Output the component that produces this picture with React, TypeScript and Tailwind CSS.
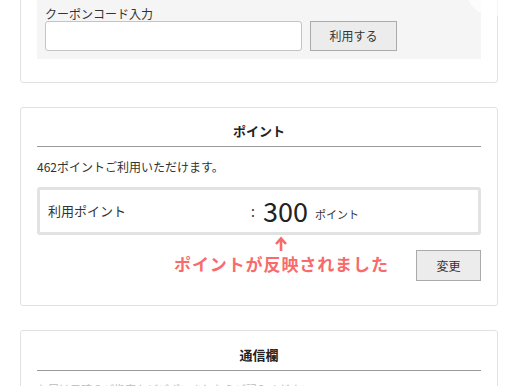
import React from "react";

const font = { fontFamily: '"Noto Sans CJK JP", "Noto Sans", sans-serif' };

function Title({ children }: { children: React.ReactNode }) {
  return (
    <div className="h-[26px] border-b border-[#999] flex items-start justify-center">
      <span className="text-[13px] font-bold leading-[20px] text-[#222]">{children}</span>
    </div>
  );
}

export default function App() {
  return (
    <div className="relative w-[518px] h-[386px] overflow-hidden bg-white text-[#333]" style={font}>
      <div className="flex flex-col gap-[24px] pl-[20px] pr-[20px] mt-[-40px] w-[518px]">
        {/* coupon card */}
        <div className="border border-[#e2e2e2] rounded-[3px] px-[16px] pb-[23px] pt-[10px]">
          <div className="bg-[#f5f5f5] px-[8px] pt-[36px] pb-[8px]">
            <div className="text-[12px] leading-[13px] text-[#333]">
              クーポンコード入力
            </div>
            <div className="flex items-center gap-[8px] mt-[1px]">
              <div className="w-[257px] h-[30px] bg-white border border-[#c4c4c4] rounded-[3px]" />
              <div className="w-[87px] h-[30px] bg-[#ececec] border border-[#aaa] flex items-center justify-center text-[12px] text-[#333]">
                利用する
              </div>
            </div>
          </div>
        </div>

        {/* point card */}
        <div className="relative border border-[#e2e2e2] rounded-[3px] px-[16px] pt-[13px] pb-[24px]">
          <Title>ポイント</Title>
          <div className="mt-[12px] text-[12px] leading-[16px] text-[#333]">462ポイントご利用いただけます。</div>
          <div className="mt-[12px] h-[48px] border-[3px] border-[#e2e2e2] rounded-[3px] flex items-center px-[8px]">
            <div className="w-[203px] text-[13px] text-[#333]">利用ポイント</div>
            <div className="text-[14px] text-[#333] w-[12px]">:</div>
            <div className="text-[27px] leading-[30px] text-[#222]">300</div>
            <div className="text-[11px] text-[#333] ml-[7px] mt-[6px]">ポイント</div>
          </div>
          <div className="relative mt-[15px] flex justify-end">
            <div className="w-[65px] h-[31px] bg-[#ececec] border border-[#aaa] flex items-center justify-center text-[12px] text-[#333]">
              変更
            </div>
            <div className="absolute left-[137px] top-[-14px] flex flex-col items-center">
              <svg width="14" height="16" viewBox="0 0 14 16" className="block">
                <path d="M7 15 V3 M2 8 L7 2.5 L12 8" stroke="#f76b6b" strokeWidth="2.6" fill="none" />
              </svg>
              <div className="mt-[2px] text-[17px] font-bold leading-[20px] text-[#f76b6b] whitespace-nowrap tracking-[0.9px]">
                ポイントが反映されました
              </div>
            </div>
          </div>
        </div>

        {/* message card */}
        <div className="border border-[#e2e2e2] rounded-[3px] px-[16px] pt-[14px] pb-[24px]">
          <Title>通信欄</Title>
          <div className="mt-[10px] text-[11px] leading-[16px] text-[#bbb]">お届け日時のご指定などございましたらご記入ください。</div>
        </div>
      </div>

      {/* faint floating circle */}
      <div className="absolute left-[466px] top-[-38px] w-[54px] h-[54px] rounded-full bg-white/70" />
    </div>
  );
}
